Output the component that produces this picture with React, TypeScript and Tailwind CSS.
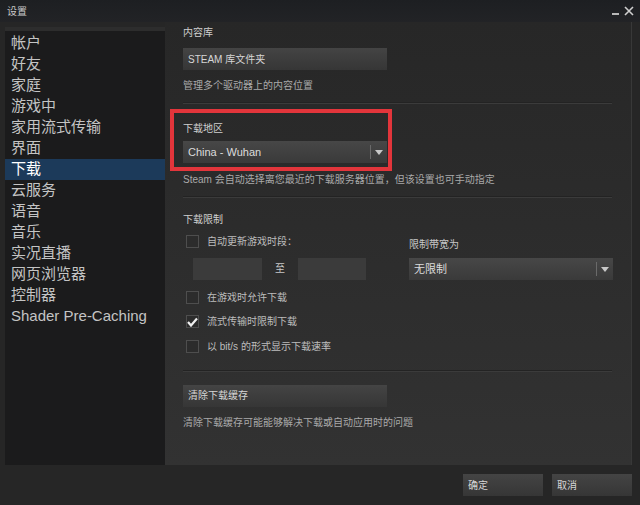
import React from 'react';

const cjk = { fontFamily: '"Liberation Sans", "Noto Sans CJK SC", sans-serif' };

const navItems = [
  '帐户', '好友', '家庭', '游戏中', '家用流式传输', '界面', '下载',
  '云服务', '语音', '音乐', '实况直播', '网页浏览器', '控制器', 'Shader Pre-Caching',
];

const Caret = () => (
  <svg width="8" height="5" viewBox="0 0 8 5">
    <path d="M0 0 H8 L4 5 Z" fill="#c8c8c8" />
  </svg>
);

const Select = ({ value, className = '' }: { value: string; className?: string }) => (
  <div className={`flex h-[22px] items-center bg-gradient-to-b from-[#474747] to-[#3a3a3a] ${className}`}>
    <span className="flex-1 pl-[5px] text-[11px] text-[#dcdcdc]">{value}</span>
    <div className="h-[14px] w-px bg-[#6a6a6a]" />
    <div className="flex w-[16px] justify-center">
      <Caret />
    </div>
  </div>
);

const Checkbox = ({ checked, label }: { checked?: boolean; label: string }) => (
  <div className="flex h-[24.5px] items-center">
    <div className="ml-[3px] flex h-[13px] w-[13px] items-center justify-center border border-[#4e4e4e] bg-[#2c2c2c]">
      {checked && (
        <svg width="11" height="10" viewBox="0 0 11 10">
          <path d="M1 5 L4 8.5 L10 1.5" stroke="#f0f0f0" strokeWidth="2.2" fill="none" />
        </svg>
      )}
    </div>
    <span className="ml-[8px] text-[10px] text-[#bdbdbd]">{label}</span>
  </div>
);

const Button = ({ label, className = '' }: { label: string; className?: string }) => (
  <div className={`flex h-[22px] items-center bg-gradient-to-b from-[#444] to-[#363636] pl-[5px] text-[10px] text-[#d6d6d6] ${className}`}>
    {label}
  </div>
);

const Separator = () => (
  <div className="mr-[20px] border-t border-[#3b3b3b] shadow-[0_-1px_0_#232323]" />
);

export default function App() {
  return (
    <div style={cjk} className="flex h-[505px] w-[640px] flex-col overflow-hidden bg-[#262626]">
      {/* title bar */}
      <div className="flex h-[22px] items-center bg-gradient-to-b from-[#1d1f22] to-[#222326] pl-[7px] pr-[6px]">
        <span className="text-[10px] text-[#c8c8c8]">设置</span>
        <div className="ml-auto flex items-center gap-[5px]">
          <div className="mt-[5px] h-[2px] w-[7px] bg-[#b8b8b8]" />
          <svg width="10" height="10" viewBox="0 0 10 10">
            <path d="M1 1 L9 9 M9 1 L1 9" stroke="#d0d0d0" strokeWidth="1.6" />
          </svg>
        </div>
      </div>

      <div className="flex h-[443px] pl-[5px] pr-[8px]">
        {/* sidebar */}
        <div className="mt-[5px] flex w-[160px] flex-col bg-[#1b1b1c]">
          <div className="h-[4px] bg-[#2d2d2d]" />
          <div className="pt-[2px]">
            {navItems.map((item) => (
              <div
                key={item}
                className={`flex h-[21px] items-center pl-[6px] text-[15px] ${
                  item === '下载' ? 'bg-[#1c3a5a] text-white' : 'text-[#c4c4c4]'
                }`}
              >
                {item}
              </div>
            ))}
          </div>
        </div>

        {/* content */}
        <div className="flex-1 bg-gradient-to-b from-[#272727] to-[#323232] pl-[18px] pt-[4px] shadow-[inset_-1px_0_0_#383838]">
          <div className="text-[10px] leading-[14px] text-[#d0d0d0]">内容库</div>
          <Button label="STEAM 库文件夹" className="mt-[8px] w-[204px]" />
          <div className="mt-[8px] text-[10px] text-[#a9a9a9]">管理多个驱动器上的内容位置</div>
          <div className="mt-[10px]">
            <Separator />
          </div>

          <div className="-ml-[13px] mt-[5px] w-[222px] border-4 border-[#e2353b] pb-[4px] pl-[9px] pr-[1px] pt-[8px]">
            <div className="text-[10px] text-[#d0d0d0]">下载地区</div>
            <Select value="China - Wuhan" className="mt-[5px] w-[204px]" />
          </div>
          <div className="mt-[1px] text-[10px] text-[#a9a9a9]">
            Steam 会自动选择离您最近的下载服务器位置，但该设置也可手动指定
          </div>
          <div className="mt-[10px]">
            <Separator />
          </div>

          <div className="mt-[14px] text-[10px] text-[#cfcfcf]">下载限制</div>
          <div className="mt-[2px] flex">
            <div className="w-[226px]">
              <Checkbox label="自动更新游戏时段：" />
              <div className="mt-[4px] flex items-center pl-[10px]">
                <div className="h-[22px] w-[69px] bg-[#3b3b3b]" />
                <span className="w-[36px] text-center text-[10px] text-[#c8c8c8]">至</span>
                <div className="h-[22px] w-[68px] bg-[#3b3b3b]" />
              </div>
            </div>
            <div className="pt-[8px]">
              <div className="text-[10px] text-[#c8c8c8]">限制带宽为</div>
              <Select value="无限制" className="mt-[6px] w-[204px]" />
            </div>
          </div>
          <div className="mt-[5px]">
            <Checkbox label="在游戏时允许下载" />
            <Checkbox checked label="流式传输时限制下载" />
            <Checkbox label="以 bit/s 的形式显示下载速率" />
          </div>
          <div className="mt-[12px]">
            <Separator />
          </div>

          <Button label="清除下载缓存" className="mt-[13px] w-[204px]" />
          <div className="mt-[8px] text-[10px] text-[#a9a9a9]">清除下载缓存可能能够解决下载或自动应用时的问题</div>
        </div>
      </div>

      {/* footer */}
      <div className="flex flex-1 items-start justify-end gap-[9px] pr-[8px] pt-[9px]">
        <Button label="确定" className="w-[80px] pl-[4px]" />
        <Button label="取消" className="w-[80px] pl-[4px]" />
      </div>
    </div>
  );
}
